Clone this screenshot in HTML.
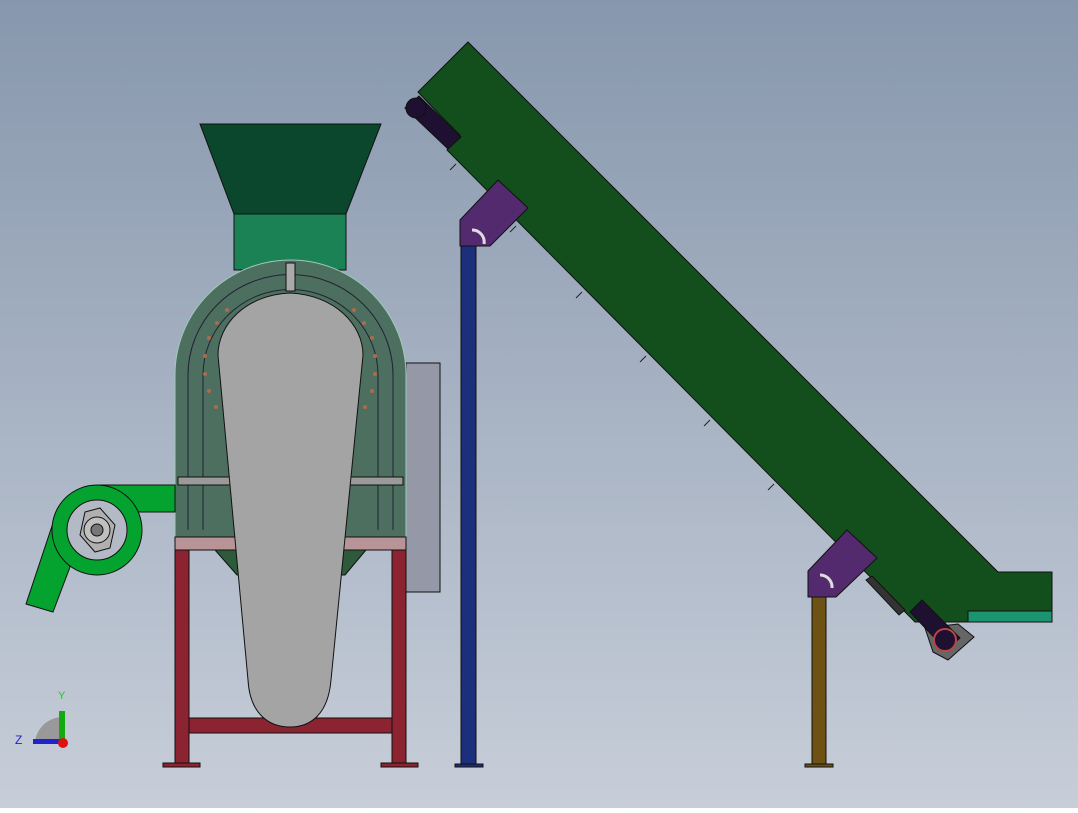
<!DOCTYPE html>
<html><head><style>html,body{margin:0;padding:0;}body{width:1078px;height:808px;overflow:hidden;}</style></head>
<body>
<svg width="1078" height="808" viewBox="0 0 1078 808" xmlns="http://www.w3.org/2000/svg">
<defs><linearGradient id="bg" x1="0" y1="0" x2="0" y2="1"><stop offset="0" stop-color="#8797ad"/><stop offset="1" stop-color="#c7ced9"/></linearGradient></defs>
<rect width="1078" height="808" fill="url(#bg)"/>
<g stroke="#111" stroke-width="1">
<!-- conveyor -->
<polygon points="468,42 998,572 1052,572 1052,622 915,622 447,150 460,135 440,115 418,92" fill="#134f1c"/>
<rect x="968" y="611" width="84" height="11" fill="#1b9470"/>
<!-- top roller -->
<polygon points="405,108 419,96 461,137 448,149" fill="#1e1030"/>
<circle cx="416" cy="108" r="10" fill="#1e1030"/>
<!-- small ticks -->
<g stroke="#222"><line x1="450" y1="170" x2="456" y2="164"/><line x1="510" y1="232" x2="516" y2="226"/><line x1="576" y1="298" x2="582" y2="292"/><line x1="640" y1="362" x2="646" y2="356"/><line x1="704" y1="426" x2="710" y2="420"/><line x1="768" y1="490" x2="774" y2="484"/></g>
<!-- blue post -->
<rect x="461" y="240" width="15" height="525" fill="#1c2f7a"/>
<rect x="455" y="764" width="28" height="3" fill="#1c2f7a"/>
<polygon points="460,220 498,180 528,208 490,246 460,246" fill="#542a6e"/>
<path d="M472,230 A12,12 0 0 1 484,244" fill="none" stroke="#ddd" stroke-width="3"/>
<!-- olive post -->
<rect x="812" y="590" width="14" height="175" fill="#6d5213"/>
<rect x="805" y="764" width="28" height="3" fill="#6d5213"/>
<polygon points="808,571 847,530 877,558 836,597 808,597" fill="#542a6e"/>
<path d="M820,575 A12,12 0 0 1 832,588" fill="none" stroke="#ddd" stroke-width="3"/>
<!-- motor -->
<polygon points="866,580 872,576 905,610 899,615" fill="#333"/>
<polygon points="925,628 958,624 974,637 948,660 933,652" fill="#666"/>
<polygon points="910,612 922,600 960,638 946,650" fill="#1e1030"/>
<circle cx="945" cy="640" r="11" fill="#1e1030" stroke="#b44" stroke-width="2"/>
<!-- hopper -->
<polygon points="200,124 381,124 346,214 234,214" fill="#0b472c"/>
<rect x="234" y="214" width="112" height="56" fill="#1b8256"/>
<!-- side panel -->
<rect x="406" y="363" width="34" height="229" fill="#9598a6"/>
<!-- drum -->
<path d="M175,537 L175,375 A115.5,115 0 0 1 406,375 L406,537 Z" fill="#4c6f60" stroke="#9ccbb8"/>
<path d="M188,530 L188,375 A102,100 0 0 1 393,375 L393,530" fill="none" stroke="#223"/>
<path d="M203,530 L203,375 A87,85 0 0 1 378,375 L378,530" fill="none" stroke="#223"/>
<rect x="178" y="477" width="225" height="8" fill="#9a9a9a"/>
<rect x="286" y="263" width="9" height="28" fill="#aaa"/>
<polygon points="215,550 366,550 345,575 237,575" fill="#2c5a3a"/>
<rect x="175" y="537" width="231" height="13" fill="#b89496"/>
<g fill="#b06a4a" stroke="none"><circle cx="227" cy="310" r="2"/><circle cx="217" cy="323" r="2"/><circle cx="209" cy="338" r="2"/><circle cx="205" cy="356" r="2"/><circle cx="205" cy="374" r="2"/><circle cx="209" cy="391" r="2"/><circle cx="216" cy="407" r="2"/><circle cx="354" cy="310" r="2"/><circle cx="364" cy="323" r="2"/><circle cx="372" cy="338" r="2"/><circle cx="375" cy="356" r="2"/><circle cx="375" cy="374" r="2"/><circle cx="372" cy="391" r="2"/><circle cx="365" cy="407" r="2"/></g>
<!-- frame -->
<rect x="175" y="550" width="14" height="215" fill="#8b2430"/>
<rect x="392" y="550" width="14" height="215" fill="#8b2430"/>
<rect x="189" y="718" width="203" height="15" fill="#8b2430"/>
<rect x="163" y="763" width="37" height="4" fill="#8b2430"/>
<rect x="381" y="763" width="37" height="4" fill="#8b2430"/>
<!-- grey body -->
<path d="M290,293 C245,295 218,325 218,355 L248,680 C250,715 270,727 290,727 C310,727 328,715 331,680 L363,355 C363,325 335,295 290,293 Z" fill="#a4a4a4"/>
<!-- blower -->
<rect x="100" y="485" width="75" height="27" fill="#04a22f"/>
<polygon points="52,526 26,604 53,612 70,567" fill="#04a22f"/>
<circle cx="97" cy="530" r="45" fill="#04a22f"/>
<circle cx="97" cy="530" r="30" fill="#b3bac6"/>
<polygon points="85,512 100,508 115,525 110,548 95,552 80,535" fill="#b0b0b0"/>
<circle cx="97" cy="530" r="13" fill="#c0c0c0"/>
<circle cx="97" cy="530" r="6" fill="#777"/>
</g>
<!-- triad -->
<path d="M35,742 A28,28 0 0 1 62,717 L62,742 Z" fill="#999"/>
<rect x="59" y="711" width="6" height="28" fill="#1a1"/>
<rect x="33" y="739" width="28" height="5" fill="#22c"/>
<circle cx="63" cy="743" r="5" fill="#d11"/>
<text x="58" y="699" font-family="Liberation Sans,sans-serif" font-size="11" fill="#2c2">Y</text>
<text x="15" y="744" font-family="Liberation Sans,sans-serif" font-size="12" fill="#22c">Z</text>
</svg>
</body></html>
